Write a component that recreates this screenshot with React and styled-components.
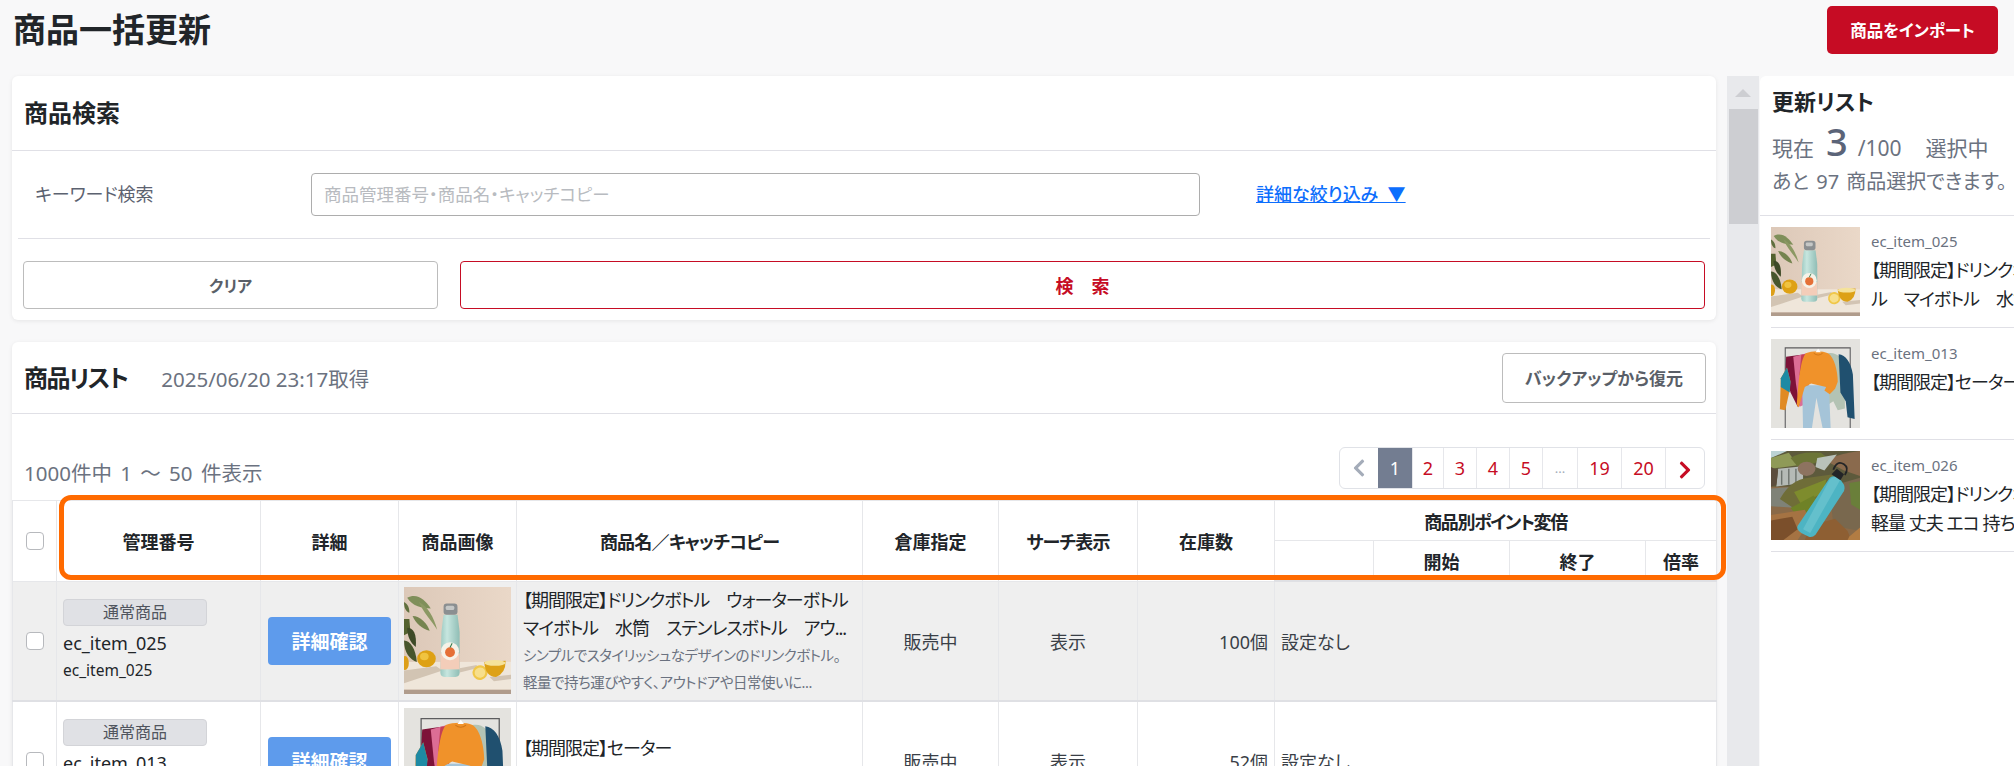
import React from "react";
import styled, { createGlobalStyle } from "styled-components";
import { FaChevronLeft, FaChevronRight } from "react-icons/fa";

const GlobalStyle = createGlobalStyle`
  html, body {
    margin: 0;
    padding: 0;
    height: 100%;
    overflow: hidden;
    background: #f8f8f9;
  }
  body, button, input, table {
    font-family: "Noto Sans", "Noto Sans CJK JP", sans-serif;
    font-feature-settings: "palt";
    color: #212529;
  }
`;

const BottlePhoto = ({ size }) => (
  <PhotoSvg width={size} height={size} viewBox="0 0 100 100">
    <defs>
      <linearGradient id="wall" x1="0" x2="1" y1="0" y2="0">
        <stop offset="0" stopColor="#dcc8b8" />
        <stop offset="1" stopColor="#ead8c8" />
      </linearGradient>
      <linearGradient id="steel" x1="0" x2="1" y1="0" y2="0">
        <stop offset="0" stopColor="#9cc9c1" />
        <stop offset="0.35" stopColor="#c7e6df" />
        <stop offset="1" stopColor="#8fbdb5" />
      </linearGradient>
    </defs>
    <rect width="100" height="100" fill="url(#wall)" />
    <rect y="70" width="100" height="26" fill="#efe6da" />
    <rect y="96" width="100" height="4" fill="#b09c8c" />
    <path d="M0 78 L30 74 L36 78 L0 90Z M52 76 L68 73 L68 76 L52 80Z M80 84 L100 82 L100 86 L84 88Z" fill="#c6b5a2" opacity="0.7" />
    <path d="M3 10 C12 5 20 12 25 20 C17 20 8 18 3 10Z" fill="#7f8f5a" />
    <path d="M14 14 C22 18 28 28 31 40 C25 30 18 24 14 14Z" fill="#8b9863" />
    <path d="M8 27 C15 27 22 34 24 41 C17 39 11 34 8 27Z" fill="#75844f" />
    <path d="M0 14 C4 16 5 20 5 24 C2 23 0 20 0 14Z" fill="#5f6f3e" />
    <path d="M0 30 L5 30 L6 42 L0 45Z" fill="#54622f" />
    <path d="M3 38 C9 38 12 44 11 56 C6 52 3 46 3 38Z" fill="#3e4a27" />
    <path d="M0 50 C6 50 11 58 12 70 C6 68 0 62 0 50Z" fill="#47552c" />
    <ellipse cx="21" cy="67" rx="8.7" ry="8" fill="#dea114" />
    <ellipse cx="19" cy="65" rx="4" ry="3.5" fill="#f0c340" />
    <ellipse cx="1" cy="71" rx="3.5" ry="6.5" fill="#dd9f18" />
    <path d="M37 26 Q36 33 35 42 L34 80 Q34 84 38 84 L48 84 Q52 84 52 80 L52 42 Q51 33 50 26Z" fill="url(#steel)" />
    <path d="M34 62 L52 62 L52 77 L34 77Z" fill="#f3cdb9" />
    <circle cx="43" cy="60" r="8.4" fill="#f6f2e8" />
    <circle cx="43" cy="61" r="4.6" fill="#e57037" />
    <path d="M43 56.5 L45 52.5" stroke="#2f7a4a" strokeWidth="1" />
    <rect x="37" y="15.5" width="13" height="10.5" rx="3" fill="#8b8f91" />
    <rect x="39" y="17.5" width="8" height="4" rx="1.5" fill="#c5c7c6" />
    <ellipse cx="71" cy="80" rx="7" ry="6.8" fill="#f0c749" transform="rotate(-15 71 80)" />
    <ellipse cx="71" cy="80" rx="5" ry="4.8" fill="#f7df8c" transform="rotate(-15 71 80)" />
    <path d="M75 70 L95 69 Q95 81 86 84 Q76 84 75 70Z" fill="#dda116" />
    <ellipse cx="85" cy="71" rx="10" ry="2.7" fill="#f5e29a" />
  </PhotoSvg>
);

const SweaterPhoto = ({ size }) => (
  <PhotoSvg width={size} height={size} viewBox="0 0 100 100">
    <rect width="100" height="100" fill="#e4e3df" />
    <path d="M16 100 V10 H89 V100" fill="none" stroke="#5c5c5e" strokeWidth="1.2" />
    <path d="M64 16 C72 14 80 20 83 30 L83 78 L75 80 L70 70 L64 74Z" fill="#b3c3b4" />
    <path d="M76 17 C84 18 90 26 92 40 L94 90 L86 88 L84 70 L78 60Z" fill="#20506f" />
    <path d="M17 20 L38 17 L38 70 L30 76 L22 60 L16 40Z" fill="#7d1238" />
    <path d="M11 44 L18 32 L22 48 L20 62 L16 80 L10 79Z" fill="#e08a23" />
    <path d="M11 44 L18 32 L22 48 L21 60 L11 54Z" fill="#1e8aa4" />
    <path d="M25 20 L40 16 L42 72 L32 76 L28 50Z" fill="#dc6d95" />
    <path d="M34 18 L48 15 L40 66 L32 40Z" fill="#c34056" />
    <path d="M35 52 L65 52 L67 100 L58 100 L51 66 L46 100 L36 100Z" fill="#a5c4d8" />
    <path d="M39 16 C46 13 58 13 64 16 C71 20 75 36 75 48 L72 56 L66 62 L60 58 L62 54 L45 50 L38 54 L31 77 L29 74 C31 46 33 24 39 16Z" fill="#f0922a" />
    <path d="M48 16 Q53 20 58 16" fill="none" stroke="#cf7518" strokeWidth="1" />
    <path d="M53 11 L50 15 H56Z" fill="#ffffff" />
  </PhotoSvg>
);

const RockPhoto = ({ size }) => (
  <PhotoSvg width={size} height={size} viewBox="0 0 100 100">
    <rect width="100" height="100" fill="#8a6a48" />
    <rect width="100" height="40" fill="#5d5a3c" />
    <path d="M0 0 H18 L0 8Z" fill="#bcd3d4" />
    <path d="M0 8 L20 2 L30 16 L0 20Z" fill="#8f9a57" />
    <path d="M22 8 Q32 0 56 2 L64 8 L32 20Z" fill="#6c7536" />
    <path d="M60 10 Q82 2 100 0 V28 L82 22Z" fill="#8a6a4d" />
    <path d="M52 8 L74 4 L60 22 L50 18Z" fill="#b9c2ba" />
    <path d="M8 20 L36 17 L36 36 L6 40Z" fill="#b5bab6" />
    <path d="M12 22 V38 M20 20 V38 M28 20 V38" stroke="#6d736e" strokeWidth="1.6" />
    <ellipse cx="40" cy="20" rx="10" ry="8" fill="#8d7360" />
    <path d="M0 18 L8 22 L6 38 L0 40Z" fill="#5c4d3d" />
    <path d="M0 42 L36 40 L30 64 L0 62Z" fill="#7f8277" />
    <path d="M10 54 Q22 32 42 30 L70 26 L66 50 L28 66Z" fill="#6f6d38" />
    <path d="M26 46 L62 32 L60 46 L34 60Z" fill="#7e8c2d" />
    <path d="M22 64 L48 50 L56 62 L30 74Z" fill="#6f8227" />
    <path d="M66 40 L100 30 V90 L70 84Z" fill="#79684e" />
    <path d="M88 36 L100 34 V66 L90 60Z" fill="#6a7f3a" />
    <path d="M0 72 L38 66 L44 78 L30 100 H0Z" fill="#a57343" />
    <path d="M0 78 L24 74 L30 88 L14 100 H0Z" fill="#7b4f2b" />
    <path d="M38 100 L44 84 L72 76 L86 90 L90 100Z" fill="#8e5f33" />
    <path d="M88 96 L100 86 V100 H86Z" fill="#b27c43" />
    <path d="M30 84 L66 30 Q72 26 78 32 L82 38 Q84 44 80 48 L50 94 Q46 98 42 96 L34 92 Q28 88 30 84Z" fill="#4db4c3" />
    <path d="M66 32 Q72 26 78 32 L44 92 L36 88Z" fill="#6ec5d0" opacity="0.7" />
    <path d="M68 26 L78 33 L82 26 L74 20Z" fill="#232527" />
    <path d="M70 21 Q74 10 82 15 Q88 19 83 27" fill="none" stroke="#232527" strokeWidth="2" />
  </PhotoSvg>
);

const products = [
  {
    code: "ec_item_025",
    photo: BottlePhoto,
    name: "【期間限定】ドリンクボトル　ウォーターボトル　マイボトル　水筒　ステンレスボトル　アウ...",
    desc: "シンプルでスタイリッシュなデザインのドリンクボトル。軽量で持ち運びやすく、アウトドアや日常使いに...",
    stock: "100個",
    active: true,
  },
  {
    code: "ec_item_013",
    photo: SweaterPhoto,
    name: "【期間限定】セーター",
    desc: "\u00a0",
    stock: "52個",
  },
];

const sideItems = [
  { code: "ec_item_025", photo: BottlePhoto, lines: ["【期間限定】ドリンクボトル", "ル　マイボトル　水筒　ステンレス"] },
  { code: "ec_item_013", photo: SweaterPhoto, lines: ["【期間限定】セーター"] },
  { code: "ec_item_026", photo: RockPhoto, lines: ["【期間限定】ドリンクボトル", "軽量 丈夫 エコ 持ち運び"] },
];

const pages = [
  { label: "1", width: 35, current: true },
  { label: "2", width: 31 },
  { label: "3", width: 33 },
  { label: "4", width: 33 },
  { label: "5", width: 33 },
  { label: "...", width: 35, dots: true },
  { label: "19", width: 44 },
  { label: "20", width: 44 },
];

const App = () => {
  return (
    <Page>
      <GlobalStyle />
      <TopBar>
        <PageTitle>商品一括更新</PageTitle>
        <ImportButton>商品をインポート</ImportButton>
      </TopBar>
      <Body>
        <Main>
          <SearchCard>
            <CardHead>
              <CardTitle>商品検索</CardTitle>
            </CardHead>
            <SearchRow>
              <SearchLabel>キーワード検索</SearchLabel>
              <SearchInput placeholder="商品管理番号・商品名・キャッチコピー" />
              <DetailLink href="#">詳細な絞り込み&nbsp;&nbsp;▼</DetailLink>
            </SearchRow>
            <SearchButtons>
              <ClearButton>クリア</ClearButton>
              <SearchButton>検　索</SearchButton>
            </SearchButtons>
          </SearchCard>

          <ListCard>
            <ListHead>
              <ListTitle>商品リスト</ListTitle>
              <Fetched>2025/06/20 23:17取得</Fetched>
              <BackupButton>バックアップから復元</BackupButton>
            </ListHead>
            <ListInfo>
              <Count>1000件中 1 〜 50 件表示</Count>
              <Pager>
                <PagerArrow>
                  <FaChevronLeft />
                </PagerArrow>
                {pages.map((p) => (
                  <PagerItem key={p.label} $width={p.width} $current={p.current} $dots={p.dots}>
                    {p.label}
                  </PagerItem>
                ))}
                <PagerArrow $next>
                  <FaChevronRight />
                </PagerArrow>
              </Pager>
            </ListInfo>
            <TableWrap>
              <Table>
                <colgroup>
                  {[44, 204, 138, 118, 346, 136, 139, 137, 99, 136, 136, 71].map((w, i) => (
                    <col key={i} width={w} />
                  ))}
                </colgroup>
                <thead>
                  <tr>
                    <Th rowSpan={2}>
                      <Check type="checkbox" />
                    </Th>
                    <Th rowSpan={2}>管理番号</Th>
                    <Th rowSpan={2}>詳細</Th>
                    <Th rowSpan={2}>商品画像</Th>
                    <Th rowSpan={2} $track={-0.8}>
                      商品名／キャッチコピー
                    </Th>
                    <Th rowSpan={2}>倉庫指定</Th>
                    <Th rowSpan={2} $track={-0.8}>
                      サーチ表示
                    </Th>
                    <Th rowSpan={2}>在庫数</Th>
                    <Th colSpan={4} $track={-1.4}>
                      商品別ポイント変倍
                    </Th>
                  </tr>
                  <tr>
                    <Th />
                    <Th>開始</Th>
                    <Th>終了</Th>
                    <Th>倍率</Th>
                  </tr>
                </thead>
                <tbody>
                  {products.map((item) => {
                    const Photo = item.photo;
                    return (
                      <Row key={item.code} $active={item.active}>
                        <Td $center>
                          <Check type="checkbox" />
                        </Td>
                        <Td>
                          <Badge>通常商品</Badge>
                          <Code>{item.code}</Code>
                          <SubCode>{item.code}</SubCode>
                        </Td>
                        <Td $center>
                          <DetailButton>詳細確認</DetailButton>
                        </Td>
                        <PhotoCell>
                          <Photo size={107} />
                        </PhotoCell>
                        <Td>
                          <ItemName>{item.name}</ItemName>
                          <ItemDesc>{item.desc}</ItemDesc>
                        </Td>
                        <Td $center>販売中</Td>
                        <Td $center>表示</Td>
                        <Td $right>{item.stock}</Td>
                        <Td colSpan={4}>設定なし</Td>
                      </Row>
                    );
                  })}
                </tbody>
              </Table>
              <HeadFrame />
            </TableWrap>
          </ListCard>
        </Main>

        <Scrollbar>
          <ScrollArrow />
          <ScrollThumb />
        </Scrollbar>

        <Side>
          <SideHead>
            <SideTitle>更新リスト</SideTitle>
            <SideCount>
              現在<BigNum>3</BigNum>/100<Selected>選択中</Selected>
            </SideCount>
            <SideRemain>あと 97 商品選択できます。</SideRemain>
          </SideHead>
          {sideItems.map((item) => {
            const Photo = item.photo;
            return (
              <SideItem key={item.code}>
                <Photo size={89} />
                <SideText>
                  <SideCode>{item.code}</SideCode>
                  {item.lines.map((line) => (
                    <SideLine key={line}>{line}</SideLine>
                  ))}
                </SideText>
              </SideItem>
            );
          })}
        </Side>
      </Body>
    </Page>
  );
};

export default App;

const Page = styled.div`
  width: 2014px;
  height: 766px;
  overflow: hidden;
`;
const PhotoSvg = styled.svg`
  display: block;
  flex: none;
  filter: blur(0.4px);
`;
const TopBar = styled.div`
  display: flex;
  align-items: center;
  justify-content: space-between;
  height: 48px;
  padding: 6px 16px 22px 13px;
`;
const PageTitle = styled.h1`
  margin: 0;
  font-size: 33px;
  font-weight: 700;
  line-height: 48px;
`;
const ImportButton = styled.button`
  width: 171px;
  height: 48px;
  border: none;
  border-radius: 5px;
  background: #c60c24;
  color: #fff;
  font-size: 16.5px;
  font-weight: 700;
`;
const Body = styled.div`
  display: flex;
  align-items: flex-start;
  padding-left: 12px;
`;
const Main = styled.div`
  flex: none;
  width: 1704px;
`;
const Card = styled.section`
  background: #fff;
  border-radius: 6px;
  box-shadow: 0 1px 4px rgba(0, 0, 0, 0.08);
`;
const SearchCard = styled(Card)`
  margin-bottom: 22px;
`;
const CardHead = styled.div`
  display: flex;
  align-items: center;
  height: 74px;
  padding: 0 12px;
  border-bottom: 1px solid #e0e0e6;
`;
const CardTitle = styled.h2`
  margin: -3px 0 0;
  font-size: 24px;
  font-weight: 700;
`;
const ListTitle = styled(CardTitle)`
  letter-spacing: -1.6px;
`;
const SearchRow = styled.div`
  display: flex;
  align-items: center;
  height: 87px;
  margin: 0 6px;
  padding-left: 17px;
  border-bottom: 1px solid #e0e0e6;
`;
const SearchLabel = styled.div`
  width: 276px;
  margin-top: -3px;
  font-size: 18px;
  color: #5c6270;
`;
const SearchInput = styled.input`
  box-sizing: border-box;
  width: 889px;
  height: 43px;
  padding: 0 12px 2px;
  border: 1px solid #adadad;
  border-radius: 4px;
  font-size: 17.5px;
  &::placeholder {
    color: #b8bbc0;
  }
`;
const DetailLink = styled.a`
  margin: -3px 0 0 56px;
  font-size: 18px;
  font-weight: 500;
  color: #0d6efd;
`;
const SearchButtons = styled.div`
  display: flex;
  gap: 22px;
  padding: 22px 11px 11px;
`;
const BaseButton = styled.button`
  height: 48px;
  border-radius: 4px;
  background: #fff;
  font-size: 16px;
  font-weight: 700;
`;
const ClearButton = styled(BaseButton)`
  flex: none;
  width: 415px;
  border: 1px solid #bcbcbc;
  color: #5a5f68;
`;
const SearchButton = styled(BaseButton)`
  flex: 1;
  border: 1px solid #c60c24;
  color: #c60c24;
  font-size: 18px;
`;
const ListCard = styled(Card)`
  border-radius: 6px 6px 0 0;
`;
const ListHead = styled.div`
  display: flex;
  align-items: center;
  height: 71px;
  padding: 0 10px 0 12px;
  border-bottom: 1px solid #e0e0e6;
`;
const Fetched = styled.span`
  margin-left: 34px;
  font-size: 20.5px;
  color: #6b7280;
`;
const BackupButton = styled(BaseButton)`
  width: 204px;
  height: 50px;
  margin-left: auto;
  border: 1px solid #bcbcbc;
  color: #5a5f68;
  font-size: 17px;
`;
const ListInfo = styled.div`
  display: flex;
  align-items: center;
  justify-content: space-between;
  padding: 33px 11px 11px 12px;
`;
const Count = styled.div`
  font-size: 20.5px;
  word-spacing: 3px;
  color: #6b7280;
  padding-top: 8px;
`;
const Pager = styled.div`
  display: flex;
  height: 42px;
  box-sizing: border-box;
  border: 1px solid #e0e2e7;
  border-radius: 6px;
  overflow: hidden;
`;
const PagerArrow = styled.div`
  display: flex;
  align-items: center;
  justify-content: center;
  box-sizing: border-box;
  width: 38px;
  padding-top: ${(p) => (p.$next ? "3px" : "0")};
  font-size: 20px;
  color: ${(p) => (p.$next ? "#c60c24" : "#a4acb9")};
`;
const PagerItem = styled.div`
  display: flex;
  align-items: center;
  justify-content: center;
  box-sizing: border-box;
  width: ${(p) => p.$width}px;
  border-right: 1px solid #e6e7eb;
  font-size: ${(p) => (p.$dots ? "13px" : "18px")};
  background: ${(p) => (p.$current ? "#737d91" : "transparent")};
  color: ${(p) => (p.$current ? "#fff" : p.$dots ? "#a4acb9" : "#c60c24")};
`;
const TableWrap = styled.div`
  position: relative;
`;
const Table = styled.table`
  width: 1704px;
  table-layout: fixed;
  border-collapse: collapse;
`;
const Th = styled.th`
  height: 39px;
  padding: 0;
  border: 1px solid #e6e7ea;
  font-size: 18px;
  font-weight: 700;
  letter-spacing: ${(p) => p.$track || 0}px;
  background: #fff;
  thead tr:last-child & {
    border-bottom: 2px solid #dfe0e4;
  }
`;
const Row = styled.tr`
  height: 120px;
  background: ${(p) => (p.$active ? "#efefef" : "#fff")};
`;
const Td = styled.td`
  padding: 0 6px;
  border: 1px solid #e6e7ea;
  border-bottom: 2px solid #dfe0e4;
  font-size: 18px;
  text-align: ${(p) => (p.$center ? "center" : p.$right ? "right" : "left")};
  color: #3a3f47;
`;
const PhotoCell = styled(Td)`
  padding: 0 5px;
`;
const Check = styled.input`
  appearance: none;
  display: block;
  width: 18px;
  height: 18px;
  margin: 0 auto;
  border: 1px solid #b7b9bd;
  border-radius: 4px;
  background: #fff;
`;
const Badge = styled.div`
  box-sizing: border-box;
  width: 144px;
  height: 27px;
  border: 1px solid #d3d4d8;
  border-radius: 4px;
  background: #e0e1e5;
  color: #50555e;
  font-size: 16px;
  line-height: 25px;
  text-align: center;
`;
const Code = styled.div`
  margin-top: 3px;
  font-size: 18px;
  line-height: 28px;
  color: #212529;
`;
const SubCode = styled.div`
  font-size: 15.5px;
  line-height: 26px;
  color: #212529;
`;
const DetailButton = styled.button`
  width: 123px;
  height: 48px;
  border: none;
  border-radius: 4px;
  background: #5e9bec;
  color: #fff;
  font-size: 19px;
  font-weight: 700;
`;
const ItemName = styled.div`
  font-size: 18px;
  letter-spacing: -1px;
  line-height: 28px;
  color: #212529;
`;
const ItemDesc = styled.div`
  padding-right: 10px;
  font-size: 14.5px;
  letter-spacing: -0.5px;
  line-height: 27px;
  color: #6b7280;
`;
const HeadFrame = styled.div`
  position: absolute;
  left: 47px;
  top: -5px;
  box-sizing: border-box;
  width: 1667px;
  height: 85px;
  border: 5px solid #ff6a00;
  border-radius: 12px;
  pointer-events: none;
`;
const Scrollbar = styled.div`
  flex: none;
  width: 32px;
  height: 690px;
  margin-left: 11px;
  padding-top: 1px;
  background: #e8e9ec;
`;
const ScrollArrow = styled.div`
  width: 0;
  height: 0;
  margin: 12px auto 12px;
  border-left: 8px solid transparent;
  border-right: 8px solid transparent;
  border-bottom: 8px solid #cdced2;
`;
const ScrollThumb = styled.div`
  width: 29px;
  height: 115px;
  margin: 0 auto;
  background: #cdced2;
`;
const Side = styled.aside`
  flex: none;
  box-sizing: border-box;
  width: 254px;
  height: 690px;
  margin-left: 1px;
  overflow: hidden;
  background: #fff;
  border-radius: 6px 0 0 0;
`;
const SideHead = styled.div`
  box-sizing: border-box;
  width: 254px;
  height: 140px;
  padding: 11px 0 0 12px;
  border-bottom: 1px solid #e0e0e6;
  white-space: nowrap;
`;
const SideTitle = styled.h2`
  margin: 0;
  font-size: 22px;
  font-weight: 700;
  line-height: 28px;
`;
const SideCount = styled.div`
  display: flex;
  align-items: baseline;
  height: 52px;
  font-size: 21px;
  line-height: 52px;
  color: #6b7280;
`;
const BigNum = styled.span`
  margin: 0 10px 0 12px;
  font-size: 38px;
  font-weight: 500;
  color: #5b6478;
`;
const Selected = styled.span`
  margin-left: 24px;
`;
const SideRemain = styled.div`
  font-size: 20px;
  word-spacing: 2px;
  line-height: 30px;
  color: #6b7280;
`;
const SideItem = styled.div`
  display: flex;
  gap: 11px;
  width: 243px;
  margin-left: 11px;
  padding: 11px 0;
  border-bottom: 1px solid #e0e0e6;
`;
const SideText = styled.div`
  min-width: 0;
  padding-top: 1px;
  white-space: nowrap;
`;
const SideCode = styled.div`
  margin-bottom: 2px;
  font-size: 15px;
  line-height: 26px;
  color: #6b7280;
`;
const SideLine = styled.div`
  font-size: 18px;
  letter-spacing: -1px;
  line-height: 29px;
  color: #212529;
`;
